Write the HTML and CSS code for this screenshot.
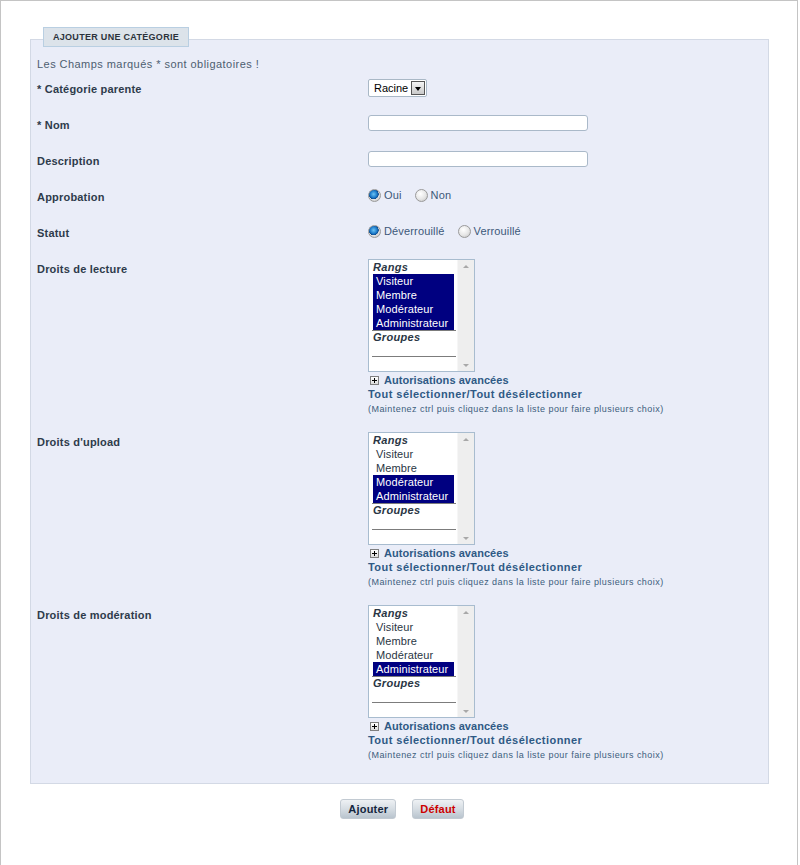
FILE: index.html
```html
<!DOCTYPE html>
<html lang="fr">
<head>
<meta charset="utf-8">
<title>Ajouter une catégorie</title>
<link rel="stylesheet" href="styles.css">
</head>
<body>
<div class="page">
  <form class="form">
    <div class="tab">Ajouter une catégorie</div>
    <div class="box">
      <p class="note">Les Champs marqués * sont obligatoires !</p>

      <div class="row">
        <label class="lbl">* Catégorie parente</label>
        <div class="field">
          <div class="select"><span class="select-val">Racine</span><span class="select-btn"><span class="tri"></span></span></div>
        </div>
      </div>

      <div class="row">
        <label class="lbl">* Nom</label>
        <div class="field"><input class="text" type="text"></div>
      </div>

      <div class="row">
        <label class="lbl">Description</label>
        <div class="field"><input class="text" type="text"></div>
      </div>

      <div class="row">
        <label class="lbl">Approbation</label>
        <div class="field radios">
          <span class="radio-item"><span class="radio on"></span>Oui</span>
          <span class="radio-item"><span class="radio"></span>Non</span>
        </div>
      </div>

      <div class="row">
        <label class="lbl">Statut</label>
        <div class="field radios">
          <span class="radio-item"><span class="radio on"></span>Déverrouillé</span>
          <span class="radio-item"><span class="radio"></span>Verrouillé</span>
        </div>
      </div>

      <div class="row row-list">
        <label class="lbl">Droits de lecture</label>
        <div class="field">
          <div class="listbox">
            <div class="list">
              <div class="group">Rangs</div>
              <div class="opts">
                <div class="opt sel">Visiteur</div>
                <div class="opt sel">Membre</div>
                <div class="opt sel">Modérateur</div>
                <div class="opt sel">Administrateur</div>
              </div>
              <div class="group">Groupes</div>
              <div class="opts empty"></div>
            </div>
            <div class="scroll"><span class="arr up"></span><span class="arr down"></span></div>
          </div>
          <div class="adv"><span class="plus"></span>Autorisations avancées</div>
          <div class="links"><a>Tout sélectionner</a>/<a>Tout désélectionner</a></div>
          <div class="hint">(Maintenez ctrl puis cliquez dans la liste pour faire plusieurs choix)</div>
        </div>
      </div>

      <div class="row row-list">
        <label class="lbl">Droits d'upload</label>
        <div class="field">
          <div class="listbox">
            <div class="list">
              <div class="group">Rangs</div>
              <div class="opts">
                <div class="opt">Visiteur</div>
                <div class="opt">Membre</div>
                <div class="opt sel">Modérateur</div>
                <div class="opt sel">Administrateur</div>
              </div>
              <div class="group">Groupes</div>
              <div class="opts empty"></div>
            </div>
            <div class="scroll"><span class="arr up"></span><span class="arr down"></span></div>
          </div>
          <div class="adv"><span class="plus"></span>Autorisations avancées</div>
          <div class="links"><a>Tout sélectionner</a>/<a>Tout désélectionner</a></div>
          <div class="hint">(Maintenez ctrl puis cliquez dans la liste pour faire plusieurs choix)</div>
        </div>
      </div>

      <div class="row row-list">
        <label class="lbl">Droits de modération</label>
        <div class="field">
          <div class="listbox">
            <div class="list">
              <div class="group">Rangs</div>
              <div class="opts">
                <div class="opt">Visiteur</div>
                <div class="opt">Membre</div>
                <div class="opt">Modérateur</div>
                <div class="opt sel">Administrateur</div>
              </div>
              <div class="group">Groupes</div>
              <div class="opts empty"></div>
            </div>
            <div class="scroll"><span class="arr up"></span><span class="arr down"></span></div>
          </div>
          <div class="adv"><span class="plus"></span>Autorisations avancées</div>
          <div class="links"><a>Tout sélectionner</a>/<a>Tout désélectionner</a></div>
          <div class="hint">(Maintenez ctrl puis cliquez dans la liste pour faire plusieurs choix)</div>
        </div>
      </div>
    </div>

    <div class="actions">
      <button type="button" class="btn">Ajouter</button>
      <button type="button" class="btn btn-reset">Défaut</button>
    </div>
  </form>
</div>
</body>
</html>
```

FILE: styles.css
```css
html, body {
  margin: 0;
  padding: 0;
  background: #ffffff;
}

body {
  font-family: "Liberation Sans", Arial, sans-serif;
  font-size: 11px;
  letter-spacing: 0.45px;
  color: #2e3b4b;
}

.page {
  width: 796px;
  height: 864px;
  border: 1px solid #c4c4c4;
  border-bottom: none;
}

.form {
  margin: 0;
  padding: 26px 0 0 29px;
  width: 739px;
}

.tab {
  display: block;
  position: relative;
  z-index: 1;
  box-sizing: border-box;
  margin-left: 13px;
  margin-bottom: -8px;
  width: 146px;
  height: 20px;
  line-height: 18px;
  text-align: center;
  background: #dce3ea;
  border: 1px solid #b9cfe2;
  font-size: 9px;
  font-weight: bold;
  letter-spacing: 0.3px;
  text-transform: uppercase;
  color: #2b323b;
}

.box {
  background: #eaedf8;
  border: 1px solid #d3d9e5;
  padding: 17px 6px 13px 6px;
}

.note {
  margin: 0;
  line-height: 14px;
  color: #4d5e70;
}

.row {
  display: grid;
  grid-template-columns: 331px 1fr;
  align-items: start;
  padding: 8px 0;
  min-height: 20px;
}

.lbl {
  font-weight: bold;
  line-height: 20px;
  letter-spacing: 0.2px;
  color: #2e3b4b;
}

.field {
  min-height: 20px;
}

.select {
  display: inline-flex;
  align-items: center;
  height: 16px;
  width: 57px;
  border: 1px solid #a9b8c6;
  border-radius: 2px;
  background: #fff;
  color: #000;
  letter-spacing: 0;
}

.select-val {
  flex: 1;
  padding-left: 5px;
  font-size: 11px;
}

.select-btn {
  width: 14px;
  height: 14px;
  margin-right: 1px;
  box-sizing: border-box;
  border: 1px solid #555;
  background: linear-gradient(#f4f4f4, #c9c9c9);
  display: flex;
  align-items: center;
  justify-content: center;
}

.tri {
  width: 0;
  height: 0;
  border-left: 3.5px solid transparent;
  border-right: 3.5px solid transparent;
  border-top: 4px solid #000;
  margin-top: 2px;
}

.text {
  display: block;
  box-sizing: border-box;
  width: 220px;
  height: 16px;
  margin: 0;
  padding: 0 3px;
  border: 1px solid #aab9c9;
  border-radius: 3px;
  background: #fff;
  font: inherit;
}

.radios {
  display: flex;
  align-items: center;
  gap: 13px;
  height: 20px;
  margin-top: -2px;
  letter-spacing: 0.15px;
  color: #3c5878;
}

.radio-item {
  display: inline-flex;
  align-items: center;
  gap: 3px;
}

.radio {
  display: inline-block;
  box-sizing: border-box;
  width: 13px;
  height: 13px;
  border-radius: 50%;
  border: 1px solid #9a9a9a;
  background: radial-gradient(circle at 40% 35%, #ffffff 0%, #e6e6e6 55%, #bdbdbd 100%);
}

.radio.on {
  background:
    radial-gradient(circle at 42% 38%, #6cc4f4 0%, #1a78c8 38%, #0d4a8a 52%, transparent 56%),
    radial-gradient(circle at 40% 35%, #ffffff 0%, #e0e0e0 60%, #b8b8b8 100%);
}

.listbox {
  display: flex;
  width: 107px;
  height: 113px;
  box-sizing: border-box;
  border: 1px solid #a8bccf;
  background: #fff;
}

.list {
  flex: 1;
  padding: 1px 3px 0 3px;
}

.group {
  font-weight: bold;
  font-style: italic;
  line-height: 13px;
  height: 13px;
  color: #2a3644;
  padding-left: 1px;
  letter-spacing: 0.3px;
}

.opts {
  border-bottom: 1px solid #7c7c7c;
  margin-right: -2px;
}

.opts.empty {
  height: 12px;
}

.opt {
  line-height: 14px;
  height: 14px;
  padding-left: 3px;
  margin-left: 1px;
  color: #2a3644;
  width: 78px;
  white-space: nowrap;
  letter-spacing: 0.1px;
}

.opt.sel {
  background: #000080;
  color: #ffffff;
}

.scroll {
  width: 16px;
  background: #eeeeee;
  border-left: 1px solid #f6f6f6;
  display: flex;
  flex-direction: column;
  justify-content: space-between;
  align-items: center;
  padding: 5px 0 4px;
}

.arr {
  width: 0;
  height: 0;
  border-left: 3px solid transparent;
  border-right: 3px solid transparent;
}

.arr.up {
  border-bottom: 3px solid #a8a8a8;
}

.arr.down {
  border-top: 3px solid #a8a8a8;
}

.adv {
  display: flex;
  align-items: center;
  margin-top: 1px;
  padding-left: 2px;
  line-height: 14px;
  font-weight: bold;
  letter-spacing: 0.05px;
  color: #2f5a85;
}

.plus {
  position: relative;
  display: inline-block;
  box-sizing: border-box;
  width: 9px;
  height: 9px;
  margin-right: 5px;
  border: 1px solid #7f7f7f;
  background: linear-gradient(#ffffff, #dcdcdc);
}

.plus::before,
.plus::after {
  content: "";
  position: absolute;
  background: #000;
}

.plus::before {
  left: 1px;
  top: 3px;
  width: 5px;
  height: 1px;
}

.plus::after {
  left: 3px;
  top: 1px;
  width: 1px;
  height: 5px;
}

.links {
  line-height: 15px;
  font-weight: bold;
  color: #2f5a85;
}

.links a {
  color: #2f5a85;
}

.hint {
  font-size: 9px;
  line-height: 14px;
  letter-spacing: 0.45px;
  color: #3d5d7d;
}

.actions {
  display: flex;
  justify-content: center;
  gap: 16px;
  padding-top: 15px;
  padding-left: 5px;
}

.btn {
  height: 20px;
  padding: 0 7px;
  margin: 0;
  border: 1px solid #c2cad2;
  border-radius: 3px;
  background: linear-gradient(#eef1f4, #d6dde3 50%, #b9c4ce);
  font-family: "Liberation Sans", Arial, sans-serif;
  font-size: 11px;
  font-weight: bold;
  letter-spacing: 0.2px;
  color: #14263e;
}

.btn-reset {
  color: #cc0000;
}
```
